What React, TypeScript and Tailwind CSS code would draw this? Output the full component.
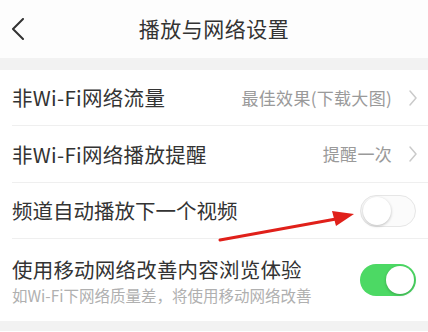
import React from 'react';

const font = { fontFamily: '"Noto Sans CJK SC", "Noto Sans", sans-serif' };

const Chevron: React.FC = () => (
  <svg width="10" height="18" viewBox="0 0 10 18" className="ml-[16px]">
    <path d="M2 2 L8 9 L2 16" stroke="#cacaca" strokeWidth="1.5" fill="none" strokeLinecap="round" strokeLinejoin="round" />
  </svg>
);

const Toggle: React.FC<{ on?: boolean }> = ({ on }) => (
  <div
    className={`w-[56px] h-[32px] rounded-full flex items-center p-[2px] ${
      on ? 'bg-[#4cd964] justify-end' : 'bg-[#fbfbfb] border border-[#e6e6e6] justify-start'
    }`}
  >
    <div className="w-[28px] h-[28px] rounded-full bg-white shadow-[0_1px_3px_rgba(0,0,0,0.25)]" />
  </div>
);

export default function App() {
  return (
    <div className="w-[428px] h-[332px] bg-white relative overflow-hidden text-[#333]" style={font}>
      {/* 顶部栏 */}
      <div className="h-[58px] grid grid-cols-[48px_1fr_48px] items-center bg-[#fdfdfd]">
        <svg width="14" height="22" viewBox="0 0 14 22" className="ml-[11px]">
          <path d="M12 1 L2 11 L12 21" stroke="#333" strokeWidth="2" fill="none" strokeLinecap="round" strokeLinejoin="round" />
        </svg>
        <div className="text-center text-[21px] text-[#333] tracking-[0.5px]">播放与网络设置</div>
        <div />
      </div>
      <div className="h-[12px] bg-[#f2f2f2]" />

      {/* 设置列表 */}
      <div className="pl-3">
        <div className="h-[56px] flex items-center border-b border-[#efefef] pr-[10px]">
          <span className="text-[20.5px] flex-1 tracking-[0.3px]">非Wi-Fi网络流量</span>
          <span className="text-[17px] text-[#9a9a9a] tracking-[0.3px]">最佳效果(下载大图)</span>
          <Chevron />
        </div>
        <div className="h-[57px] flex items-center border-b border-[#efefef] pr-[10px]">
          <span className="text-[20.5px] flex-1 tracking-[0.3px]">非Wi-Fi网络播放提醒</span>
          <span className="text-[17px] text-[#9a9a9a] tracking-[0.3px]">提醒一次</span>
          <Chevron />
        </div>
        <div className="h-[56px] flex items-center border-b border-[#efefef] pr-3">
          <span className="text-[20.5px] flex-1">频道自动播放下一个视频</span>
          <Toggle />
        </div>
        <div className="h-[82px] flex items-center pr-3">
          <div className="flex-1 flex flex-col">
            <span className="text-[20.5px] leading-[30px] tracking-[0.2px]">使用移动网络改善内容浏览体验</span>
            <span className="text-[15.5px] leading-[22px] text-[#b0b0b0]">如Wi-Fi下网络质量差，将使用移动网络改善</span>
          </div>
          <Toggle on />
        </div>
      </div>
      <div className="h-[10px] bg-[#f2f2f2]" />

      {/* 红色箭头标注 */}
      <svg className="absolute left-0 top-0 pointer-events-none" width="428" height="332" viewBox="0 0 428 332">
        <line x1="220" y1="240" x2="336" y2="219" stroke="#e0201a" strokeWidth="3" strokeLinecap="round" />
        <polygon points="354,214 332,211 336,226" fill="#e0201a" />
      </svg>
    </div>
  );
}
